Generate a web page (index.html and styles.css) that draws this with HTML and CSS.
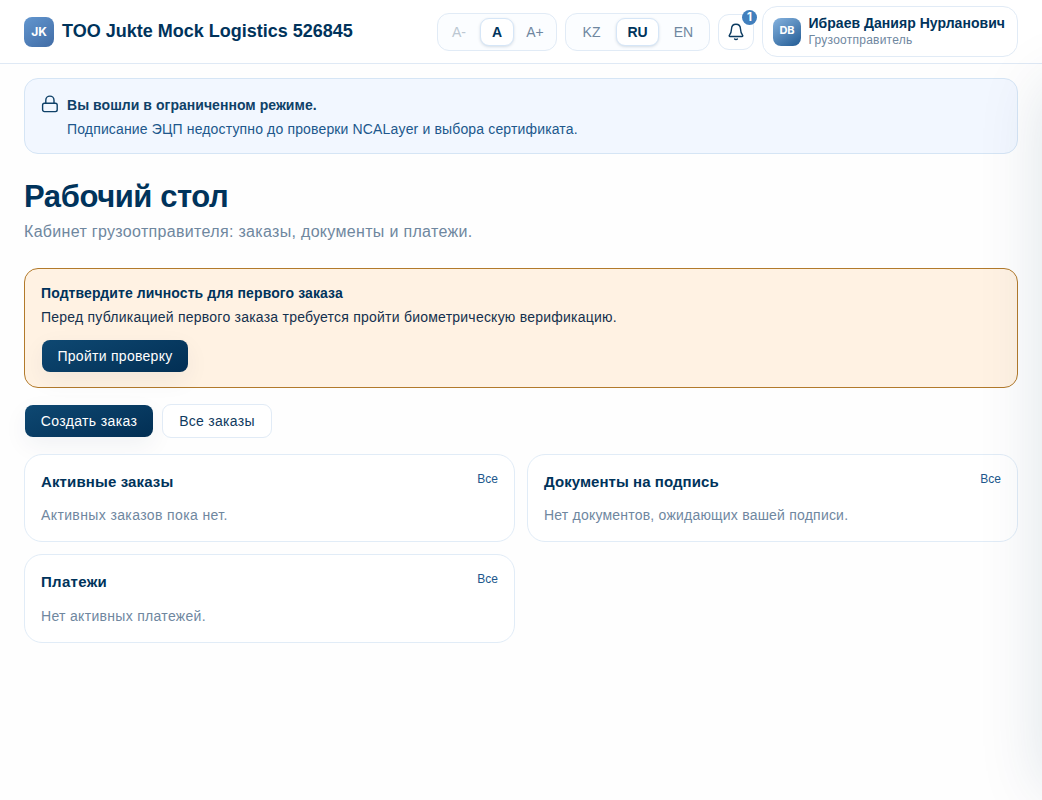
FILE: index.html
```html
<!DOCTYPE html>
<html lang="ru">
<head>
    <meta charset="UTF-8">
    <meta name="viewport" content="width=device-width, initial-scale=1.0">
    <title>Рабочий стол</title>
    <link rel="stylesheet" href="styles.css">
</head>
<body>
    <header class="topbar">
        <div class="brand">
            <span class="brand-logo">JK</span>
            <span class="brand-name">TOO Jukte Mock Logistics 526845</span>
        </div>
        <div class="topbar-actions">
            <div class="switch switch-size">
                <button class="switch-btn" disabled>A-</button>
                <button class="switch-btn active">A</button>
                <button class="switch-btn">A+</button>
            </div>
            <div class="switch switch-lang">
                <button class="switch-btn">KZ</button>
                <button class="switch-btn active">RU</button>
                <button class="switch-btn">EN</button>
            </div>
            <button class="bell" aria-label="Уведомления">
                <svg width="18" height="18" viewBox="0 0 18 18" fill="none" stroke="currentColor" stroke-width="1.4" stroke-linecap="round" stroke-linejoin="round">
                    <path d="M9 1.300C6 1.300 4.600 3.600 4.500 6C4.400 9.300 3.700 10.500 2.500 12.100C1.900 12.900 2.200 13.500 3 13.500H15C15.800 13.500 16.100 12.900 15.500 12.100C14.300 10.500 13.600 9.300 13.500 6C13.400 3.600 12 1.300 9 1.300Z"/>
                    <path d="M7.600 16C8.300 16.700 9.700 16.700 10.400 16"/>
                </svg>
                <span class="bell-count">1</span>
            </button>
            <div class="user">
                <span class="avatar">DB</span>
                <div class="user-info">
                    <span class="user-name">Ибраев Данияр Нурланович</span>
                    <span class="user-role">Грузоотправитель</span>
                </div>
            </div>
        </div>
    </header>

    <main>
        <section class="notice">
            <svg class="notice-icon" width="18" height="18" viewBox="0 0 18 18" fill="none" stroke="currentColor" stroke-width="1.4" stroke-linejoin="round">
                <rect x="1.600" y="8.200" width="14.600" height="8.400" rx="1.800"/>
                <path d="M4.800 8.200V5.200a4.100 4.100 0 0 1 8.200 0V8.200"/>
            </svg>
            <div>
                <p class="notice-title">Вы вошли в ограниченном режиме.</p>
                <p class="notice-text">Подписание ЭЦП недоступно до проверки NCALayer и выбора сертификата.</p>
            </div>
        </section>

        <h1>Рабочий стол</h1>
        <p class="subtitle">Кабинет грузоотправителя: заказы, документы и платежи.</p>

        <section class="verify">
            <p class="verify-title">Подтвердите личность для первого заказа</p>
            <p class="verify-text">Перед публикацией первого заказа требуется пройти биометрическую верификацию.</p>
            <button class="btn btn-primary btn-verify">Пройти проверку</button>
        </section>

        <div class="actions">
            <button class="btn btn-primary btn-create">Создать заказ</button>
            <button class="btn btn-outline">Все заказы</button>
        </div>

        <div class="cards">
            <section class="card card-orders">
                <div class="card-head">
                    <h2>Активные заказы</h2>
                    <a href="#">Все</a>
                </div>
                <p>Активных заказов пока нет.</p>
            </section>
            <section class="card card-docs">
                <div class="card-head">
                    <h2>Документы на подпись</h2>
                    <a href="#">Все</a>
                </div>
                <p>Нет документов, ожидающих вашей подписи.</p>
            </section>
            <section class="card card-payments">
                <div class="card-head">
                    <h2>Платежи</h2>
                    <a href="#">Все</a>
                </div>
                <p>Нет активных платежей.</p>
            </section>
        </div>
    </main>

    <!-- closed side panel, only its shadow reaches the page -->
    <aside class="drawer"></aside>
</body>
</html>
```

FILE: styles.css
```css
* {
    box-sizing: border-box;
}

body {
    margin: 0;
    min-height: 100vh;
    overflow: hidden;
    font-family: "Liberation Sans", Arial, sans-serif;
    font-size: 14px;
    color: #00335b;
    background: #fefefe;
    white-space: nowrap;
}

p, h1, h2 {
    margin: 0;
}

button {
    font-family: inherit;
    padding: 0;
    cursor: pointer;
}

/* Top bar */
.topbar {
    display: flex;
    align-items: center;
    justify-content: space-between;
    height: 64px;
    padding: 0 24px;
    background: #fff;
    border-bottom: 1px solid #dfe9f5;
}

.brand {
    display: flex;
    align-items: center;
    gap: 8px;
}

.brand-logo {
    display: flex;
    align-items: center;
    justify-content: center;
    width: 30px;
    height: 30px;
    border-radius: 8px;
    background: linear-gradient(145deg, #6296cf, #416ca5);
    color: #fff;
    font-family: Inter, sans-serif;
    font-size: 12px;
    font-weight: 700;
}

.brand-name {
    font-size: 18px;
    font-weight: 700;
}

.topbar-actions {
    display: flex;
    align-items: center;
    gap: 8px;
}

.switch {
    display: flex;
    align-items: center;
    justify-content: space-between;
    height: 38px;
    padding: 0 4px;
    border: 1px solid #e1ebf6;
    border-radius: 12px;
    background: #fbfdff;
}

.switch-size {
    width: 120px;
}

.switch-lang {
    width: 145px;
}

.switch-btn {
    width: 34px;
    height: 28px;
    border: 1px solid transparent;
    border-radius: 9px;
    background: none;
    color: #6f879f;
    font-size: 14px;
}

.switch-lang .switch-btn {
    width: 43px;
}

.switch-btn:disabled {
    color: #bcc7d2;
}

.switch-btn.active {
    background: #fff;
    border-color: #d6e6f7;
    color: #00335b;
    font-weight: 700;
    box-shadow: 0 1px 3px rgba(0, 51, 91, 0.16);
}

.bell {
    position: relative;
    display: flex;
    align-items: center;
    justify-content: center;
    width: 36px;
    height: 36px;
    border: 1px solid #e1ebf6;
    border-radius: 11px;
    background: #fff;
    color: #0b3a60;
}

.bell-count {
    position: absolute;
    top: -5px;
    right: -4px;
    width: 15px;
    height: 15px;
    border-radius: 50%;
    background: #417fbd;
    color: #fff;
    font-family: Inter, sans-serif;
    font-size: 11.5px;
    font-weight: 700;
    line-height: 15px;
    text-align: center;
}

.user {
    display: flex;
    align-items: center;
    gap: 7.5px;
    width: 256px;
    height: 51px;
    padding: 0 10px;
    border: 1px solid #e1ebf6;
    border-radius: 15px;
}

.avatar {
    flex: none;
    width: 28px;
    height: 28px;
    border-radius: 8px;
    background: linear-gradient(145deg, #86b3df, #225b94);
    color: #fff;
    font-family: Inter, sans-serif;
    font-size: 11px;
    font-weight: 700;
    line-height: 25px;
    text-align: center;
}

.user-info {
    display: flex;
    flex-direction: column;
}

.user-name {
    font-size: 14px;
    font-weight: 700;
    line-height: 18px;
    letter-spacing: 0.03px;
    margin-top: -1px;
}

.user-role {
    color: #6f879f;
    font-size: 12px;
    line-height: 16px;
    letter-spacing: 0.24px;
}

/* Content */
main {
    padding: 14px 24px;
}

.notice {
    display: flex;
    gap: 8px;
    height: 76px;
    padding: 14px 16px;
    border: 1px solid #d5e5f5;
    border-radius: 14px;
    background: #f2f7ff;
}

.notice-icon {
    margin-top: 2px;
    color: #0f4168;
}

.notice-title {
    color: #0f4168;
    font-weight: 700;
    line-height: 24px;
    letter-spacing: 0.04px;
}

.notice-text {
    color: #20578c;
    line-height: 24px;
    letter-spacing: 0.15px;
}

h1 {
    margin-top: 24px;
    font-size: 31px;
    line-height: 38px;
    letter-spacing: -0.42px;
}

.subtitle {
    margin-top: 4px;
    color: #6f879f;
    font-size: 16px;
    line-height: 24px;
    letter-spacing: 0.32px;
}

.verify {
    height: 120px;
    margin-top: 24px;
    padding: 12px 16px;
    border: 1px solid #b27a2b;
    border-radius: 14px;
    background: #fff2e3;
}

.verify-title {
    font-weight: 700;
    line-height: 24px;
    letter-spacing: 0.1px;
}

.verify-text {
    color: #14304d;
    line-height: 24px;
    letter-spacing: 0.23px;
}

.btn {
    display: block;
    height: 32px;
    border: none;
    border-radius: 8px;
    font-size: 14px;
    letter-spacing: 0.28px;
}

.btn-primary {
    background: linear-gradient(160deg, #0e4872, #022f54);
    color: #fff;
    box-shadow: 0 8px 24px rgba(0, 51, 91, 0.06);
}

.btn-verify {
    width: 146px;
    margin: 11px 0 0 1px;
}

.btn-create {
    width: 128px;
    letter-spacing: 0.36px;
}

.btn-outline {
    width: 110px;
    height: 34px;
    border: 1px solid #e1ebf6;
    border-radius: 9px;
    background: #fff;
    color: #0f3a60;
}

.actions {
    display: flex;
    align-items: center;
    gap: 9px;
    margin-top: 16px;
    padding-left: 1px;
}

.cards {
    display: grid;
    grid-template-columns: 1fr 1fr;
    grid-template-rows: 88px 89px;
    gap: 12px;
    margin-top: 16px;
}

.card {
    padding: 15px 16px;
    border: 1px solid #e1ecf7;
    border-radius: 18px;
    background: #fff;
}

.card-head {
    display: flex;
    justify-content: space-between;
    height: 33px;
}

.card h2 {
    font-size: 15px;
    line-height: 24px;
    letter-spacing: 0.13px;
}

.card a {
    color: #20578c;
    font-size: 12px;
    line-height: 18px;
    text-decoration: none;
}

.card p {
    color: #6f879f;
    line-height: 24px;
    letter-spacing: 0.38px;
}

.card-docs h2 {
    letter-spacing: 0.06px;
}

.card-docs p {
    letter-spacing: 0.21px;
}

.card-payments .card-head {
    height: 34px;
}

.card-payments h2 {
    letter-spacing: 0.3px;
}

.card-payments p {
    letter-spacing: 0.31px;
}

.drawer {
    position: fixed;
    top: 84px;
    bottom: 10px;
    left: 100%;
    width: 320px;
    box-shadow: 0 0 60px rgba(0, 51, 91, 0.13);
}
```
